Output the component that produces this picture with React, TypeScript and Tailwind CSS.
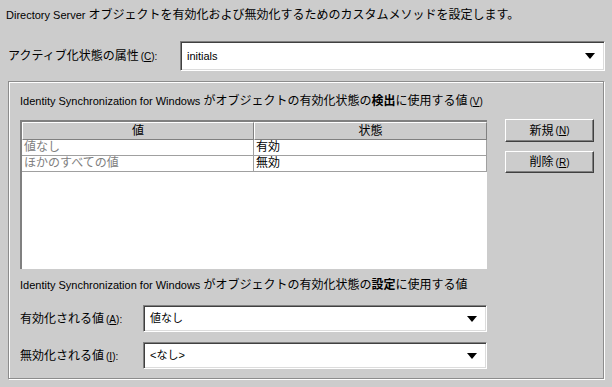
import React from 'react';

const font = { fontFamily: '"Liberation Sans", "Noto Sans CJK JP", sans-serif' };

// Japanese runs are slightly larger than the latin ones in the original
const J: React.FC<{ children: React.ReactNode; bold?: boolean }> = ({ children, bold }) => (
  <span className={`text-[12px] ${bold ? 'font-bold' : ''}`}>{children}</span>
);

const Mn: React.FC<{ k: string; colon?: boolean }> = ({ k, colon }) => (
  <span className="text-[10px] ml-[2px]">
    (<span className="underline">{k}</span>){colon ? ':' : ''}
  </span>
);

const Arrow = () => (
  <svg width="10" height="6" viewBox="0 0 10 6" className="shrink-0">
    <path d="M0 0 H10 L5 6 Z" fill="#000" />
  </svg>
);

const Combo: React.FC<{ value: string; className: string }> = ({ value, className }) => (
  <div
    className={`flex items-center bg-white border border-t-[#808080] border-l-[#808080] border-b-white border-r-white shadow-[inset_1px_1px_0_#404040,inset_-1px_-1px_0_#dcdcdc] pl-[6px] pr-[9px] ${className}`}
  >
    <span className="flex-1 text-[11px] text-black">{value}</span>
    <Arrow />
  </div>
);

const Button: React.FC<{ label: string; k: string; className?: string }> = ({ label, k, className }) => (
  <button
    className={`w-[89px] flex items-center justify-center bg-[#cccccc] border border-t-white border-l-white border-b-[#404040] border-r-[#404040] shadow-[inset_-1px_-1px_0_#808080] text-black ${className ?? ''}`}
  >
    <J>{label}</J>
    <Mn k={k} />
  </button>
);

const rows = [
  { value: '値なし', state: '有効' },
  { value: 'ほかのすべての値', state: '無効' },
];

export default function App() {
  return (
    <div className="w-[612px] h-[387px] bg-[#cccccc] overflow-hidden flex flex-col text-black text-[11px]" style={font}>
      <div className="mt-[8px] ml-[6px] h-[14px] leading-[14px] whitespace-nowrap">
        Directory Server <J>オブジェクトを有効化および無効化するためのカスタムメソッドを設定します。</J>
      </div>

      <div className="mt-[19px] h-[30px] flex items-center">
        <div className="ml-[8px] w-[172px] whitespace-nowrap">
          <J>アクティブ化状態の属性</J>
          <Mn k="C" colon />
        </div>
        <Combo value="initials" className="w-[425px] h-[30px]" />
      </div>

      <div className="mt-[10px] ml-[8px] w-[596px] h-[298px] border border-[#8c8c8c] shadow-[inset_1px_1px_0_#ffffff,1px_1px_0_#ffffff] pl-[11px] flex flex-col">
        <div className="mt-[12px] h-[14px] leading-[14px] whitespace-nowrap">
          Identity Synchronization for Windows <J>がオブジェクトの有効化状態の</J>
          <J bold>検出</J>
          <J>に使用する値</J>
          <Mn k="V" />
        </div>

        <div className="mt-[12px] flex">
          <div className="w-[467px] h-[149px] bg-white border-t-2 border-l-2 border-t-[#808080] border-l-[#808080]">
            <div className="w-[465px] flex h-[18px] bg-[#cccccc]">
              <div className="w-[232px] flex items-center justify-center border border-t-white border-l-white border-b-[#808080] border-r-[#808080]">
                <J>値</J>
              </div>
              <div className="flex-1 flex items-center justify-center border border-t-white border-l-white border-b-[#808080] border-r-[#808080]">
                <J>状態</J>
              </div>
            </div>
            {rows.map((r) => (
              <div key={r.value} className="w-[465px] flex h-[16px] border-b border-[#a0a0a0]">
                <div className="w-[232px] pl-[2px] leading-[15px] text-[#808080] border-r border-[#a0a0a0]">
                  <J>{r.value}</J>
                </div>
                <div className="flex-1 pl-[2px] leading-[15px] border-r border-[#a0a0a0]">
                  <J>{r.state}</J>
                </div>
              </div>
            ))}
          </div>

          <div className="ml-[18px] flex flex-col -mt-px">
            <Button label="新規" k="N" className="h-[23px]" />
            <Button label="削除" k="R" className="h-[22px] mt-[9px]" />
          </div>
        </div>

        <div className="mt-[9px] h-[14px] leading-[14px] whitespace-nowrap">
          Identity Synchronization for Windows <J>がオブジェクトの有効化状態の</J>
          <J bold>設定</J>
          <J>に使用する値</J>
        </div>

        <div className="mt-[13px] flex items-center">
          <div className="w-[123px] whitespace-nowrap">
            <J>有効化される値</J>
            <Mn k="A" colon />
          </div>
          <Combo value="値なし" className="w-[344px] h-[27px]" />
        </div>

        <div className="mt-[10px] flex items-center">
          <div className="w-[123px] whitespace-nowrap">
            <J>無効化される値</J>
            <Mn k="I" colon />
          </div>
          <Combo value="<なし>" className="w-[344px] h-[27px]" />
        </div>
      </div>
    </div>
  );
}
